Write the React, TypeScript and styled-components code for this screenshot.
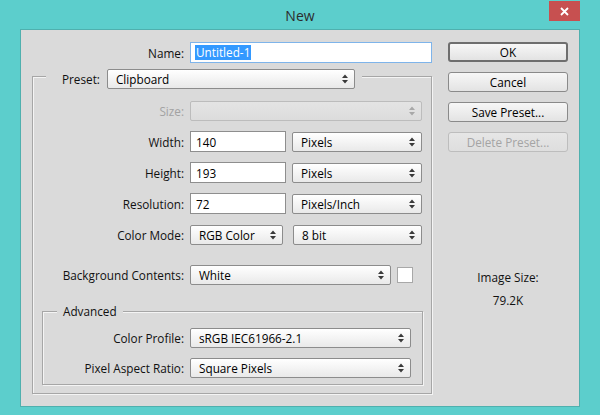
import React from "react";
import styled, { createGlobalStyle, css } from "styled-components";

const GlobalStyle = createGlobalStyle`
  html, body { margin: 0; padding: 0; background: #5ccecc; }
  body {
    font-family: "Open Sans", "Noto Sans", "Liberation Sans", sans-serif;
    font-size: 11.75px;
    color: #111;
  }
  * { box-sizing: border-box; }
`;

const Window = styled.div`
  width: 600px;
  height: 415px;
  background: #5ccecc;
  display: flex;
  flex-direction: column;
  overflow: hidden;
`;

const TitleBar = styled.div`
  height: 30px;
  display: grid;
  grid-template-columns: 1fr auto 1fr;
  padding: 0 20px;
`;

const Title = styled.div`
  grid-column: 2;
  align-self: center;
  font-size: 14px;
  color: #2c2c2c;
  line-height: 18px;
  margin-top: 2px;
`;

const CloseButton = styled.div`
  grid-column: 3;
  justify-self: end;
  margin-top: 1px;
  width: 31px;
  height: 20px;
  background: #c75050;
  color: #fff;
  display: flex;
  align-items: center;
  justify-content: center;
`;

const Dialog = styled.div`
  margin: 0 21px;
  height: 376px;
  background: #dadada;
  box-shadow: 0 0 0 1px #4fb0ae;
  display: flex;
  gap: 16px;
  padding: 12px 11px 0 11px;
`;

const FormColumn = styled.div`
  width: 400px;
  display: flex;
  flex-direction: column;
`;

const ButtonColumn = styled.div`
  width: 120px;
  display: flex;
  flex-direction: column;
  gap: 10px;
`;

const FieldRow = styled.div<{ $label: number; $mt?: number }>`
  display: grid;
  grid-template-columns: ${(p) => p.$label}px auto;
  column-gap: 6px;
  align-items: center;
  height: 21px;
  margin-top: ${(p) => p.$mt ?? 0}px;
`;

const Controls = styled.div<{ $gap?: number }>`
  display: flex;
  align-items: center;
  gap: ${(p) => p.$gap ?? 6}px;
`;

const Label = styled.span<{ $disabled?: boolean }>`
  text-align: right;
  white-space: nowrap;
  color: ${(p) => (p.$disabled ? "#a2a2a2" : "#111")};
`;

const TextInput = styled.div<{ $w: number; $focused?: boolean }>`
  width: ${(p) => p.$w}px;
  height: 21px;
  background: #fff;
  border: 1px solid ${(p) => (p.$focused ? "#7eb4ea" : "#8e8e8e")};
  padding: 0 5px;
  display: flex;
  align-items: center;
  color: #000;
`;

const Selection = styled.span`
  background: #3399ff;
  color: #fff;
  padding: 0 1px;
  margin-left: -1px;
  line-height: 15px;
`;

const SelectBox = styled.div<{ $w: number; $disabled?: boolean }>`
  width: ${(p) => p.$w}px;
  height: 20px;
  display: flex;
  align-items: center;
  justify-content: space-between;
  padding: 0 6px 0 8px;
  border: 1px solid #8c8c8c;
  border-radius: 2px;
  background: linear-gradient(#ffffff, #e9e9e9);
  color: #000;
  white-space: nowrap;
  ${(p) =>
    p.$disabled &&
    css`
      border-color: #bcbcbc;
      background: linear-gradient(#e4e4e4, #dcdcdc);
      color: #a0a0a0;
    `}
`;

const GroupBox = styled.fieldset<{ $pad: string; $ml?: number; $mt?: number }>`
  margin: ${(p) => p.$mt ?? 0}px 0 0 ${(p) => p.$ml ?? 0}px;
  min-width: 0;
  padding: ${(p) => p.$pad};
  border: 1px solid #a6a6a6;
  box-shadow: inset 1px 1px 0 #f4f4f4, 1px 1px 0 #f4f4f4;
  display: flex;
  flex-direction: column;
`;

const Legend = styled.legend<{ $ml: number; $pad: string }>`
  margin-left: ${(p) => p.$ml}px;
  padding: ${(p) => p.$pad};
  background: #dadada;
  display: flex;
  align-items: center;
  gap: 7px;
  line-height: 16px;
`;

const Swatch = styled.div`
  width: 16px;
  height: 16px;
  background: #fff;
  border: 1px solid #a8a8a8;
`;

const DialogButton = styled.div<{ $primary?: boolean; $disabled?: boolean }>`
  height: 20px;
  border: 1px solid #8a8a8a;
  border-radius: 3px;
  background: linear-gradient(#f7f7f7, #e3e3e3);
  display: flex;
  align-items: center;
  justify-content: center;
  color: #000;
  ${(p) =>
    p.$primary &&
    css`
      border: 2px solid #6e6e6e;
    `}
  ${(p) =>
    p.$disabled &&
    css`
      border-color: #bdbdbd;
      background: linear-gradient(#e6e6e6, #dedede);
      color: #a4a4a4;
    `}
`;

const InfoBlock = styled.div`
  margin-top: 107px;
  display: flex;
  flex-direction: column;
  gap: 7px;
  text-align: center;
  line-height: 16px;
`;

const Arrows = ({ disabled }: { disabled?: boolean }) => (
  <svg width="6" height="10" viewBox="0 0 6 10">
    <path d="M0 4 L3 0.5 L6 4 Z M0 6 L3 9.5 L6 6 Z" fill={disabled ? "#a8a8a8" : "#3a3a3a"} />
  </svg>
);

const Select = ({ w, value, disabled }: { w: number; value?: string; disabled?: boolean }) => (
  <SelectBox $w={w} $disabled={disabled} role="combobox">
    <span>{value}</span>
    <Arrows disabled={disabled} />
  </SelectBox>
);

export default function App() {
  return (
    <>
      <GlobalStyle />
      <Window>
        <TitleBar>
          <Title>New</Title>
          <CloseButton>
            <svg width="9" height="9" viewBox="0 0 9 9">
              <path d="M1 1 L8 8 M8 1 L1 8" stroke="#fff" strokeWidth="1.8" />
            </svg>
          </CloseButton>
        </TitleBar>
        <Dialog>
          <FormColumn>
            <FieldRow $label={152}>
              <Label>Name:</Label>
              <TextInput $w={242} $focused>
                <Selection>Untitled-1</Selection>
              </TextInput>
            </FieldRow>

            <GroupBox $pad="11px 8px 8px 0">
              <Legend $ml={13} $pad="6px 7px 0 16px">
                <Label>Preset:</Label>
                <Select w={248} value="Clipboard" />
              </Legend>

              <FieldRow $label={151}>
                <Label $disabled>Size:</Label>
                <Select w={232} disabled />
              </FieldRow>
              <FieldRow $label={151} $mt={10}>
                <Label>Width:</Label>
                <Controls>
                  <TextInput $w={96}>140</TextInput>
                  <Select w={130} value="Pixels" />
                </Controls>
              </FieldRow>
              <FieldRow $label={151} $mt={10}>
                <Label>Height:</Label>
                <Controls>
                  <TextInput $w={96}>193</TextInput>
                  <Select w={130} value="Pixels" />
                </Controls>
              </FieldRow>
              <FieldRow $label={151} $mt={10}>
                <Label>Resolution:</Label>
                <Controls>
                  <TextInput $w={96}>72</TextInput>
                  <Select w={130} value="Pixels/Inch" />
                </Controls>
              </FieldRow>
              <FieldRow $label={151} $mt={10}>
                <Label>Color Mode:</Label>
                <Controls $gap={10}>
                  <Select w={93} value="RGB Color" />
                  <Select w={129} value="8 bit" />
                </Controls>
              </FieldRow>
              <FieldRow $label={151} $mt={19}>
                <Label>Background Contents:</Label>
                <Controls>
                  <Select w={201} value="White" />
                  <Swatch />
                </Controls>
              </FieldRow>

              <GroupBox $pad="8px 0 6px 0" $ml={9} $mt={18}>
                <Legend $ml={14} $pad="0 6px">
                  <Label>Advanced</Label>
                </Legend>
                <FieldRow $label={141}>
                  <Label>Color Profile:</Label>
                  <Select w={221} value="sRGB IEC61966-2.1" />
                </FieldRow>
                <FieldRow $label={141} $mt={9}>
                  <Label>Pixel Aspect Ratio:</Label>
                  <Select w={221} value="Square Pixels" />
                </FieldRow>
              </GroupBox>
            </GroupBox>
          </FormColumn>

          <ButtonColumn>
            <DialogButton $primary>OK</DialogButton>
            <DialogButton>Cancel</DialogButton>
            <DialogButton>Save Preset...</DialogButton>
            <DialogButton $disabled>Delete Preset...</DialogButton>
            <InfoBlock>
              <span>Image Size:</span>
              <span>79.2K</span>
            </InfoBlock>
          </ButtonColumn>
        </Dialog>
      </Window>
    </>
  );
}
